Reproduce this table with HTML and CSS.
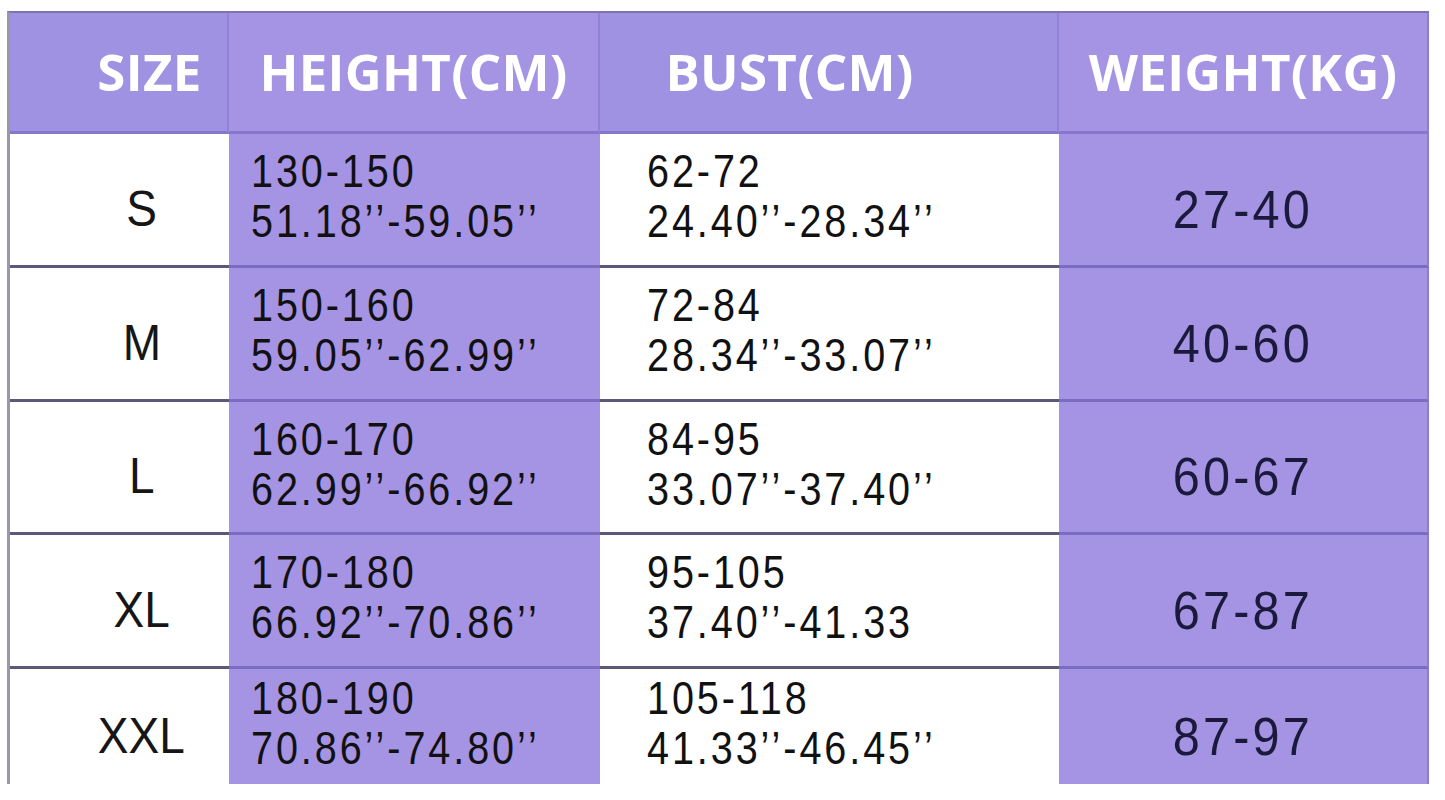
FILE: index.html
```html
<!DOCTYPE html>
<html>
<head>
<meta charset="utf-8">
<link rel="stylesheet" href="styles.css">
</head>
<body>
<div class="chart">
  <div class="cell head c1"><span class="ht size">SIZE</span></div>
  <div class="cell head c2"><span class="ht">HEIGHT(CM)</span></div>
  <div class="cell head c3"><span class="ht bust">BUST(CM)</span></div>
  <div class="cell head c4"><span class="ht">WEIGHT(KG)</span></div>

  <div class="cell c1 row"><span class="sz">S</span></div>
  <div class="cell c2 row"><div class="val"><span>130-150</span><span>51.18’’-59.05’’</span></div></div>
  <div class="cell c3 row"><div class="val"><span>62-72</span><span>24.40’’-28.34’’</span></div></div>
  <div class="cell c4 row"><span class="wt">27-40</span></div>

  <div class="cell c1 row"><span class="sz">M</span></div>
  <div class="cell c2 row"><div class="val"><span>150-160</span><span>59.05’’-62.99’’</span></div></div>
  <div class="cell c3 row"><div class="val"><span>72-84</span><span>28.34’’-33.07’’</span></div></div>
  <div class="cell c4 row"><span class="wt">40-60</span></div>

  <div class="cell c1 row"><span class="sz">L</span></div>
  <div class="cell c2 row"><div class="val"><span>160-170</span><span>62.99’’-66.92’’</span></div></div>
  <div class="cell c3 row"><div class="val"><span>84-95</span><span>33.07’’-37.40’’</span></div></div>
  <div class="cell c4 row"><span class="wt">60-67</span></div>

  <div class="cell c1 row"><span class="sz">XL</span></div>
  <div class="cell c2 row"><div class="val"><span>170-180</span><span>66.92’’-70.86’’</span></div></div>
  <div class="cell c3 row"><div class="val"><span>95-105</span><span>37.40’’-41.33</span></div></div>
  <div class="cell c4 row"><span class="wt">67-87</span></div>

  <div class="cell c1 last"><span class="sz">XXL</span></div>
  <div class="cell c2 last"><div class="val"><span>180-190</span><span>70.86’’-74.80’’</span></div></div>
  <div class="cell c3 last"><div class="val"><span>105-118</span><span>41.33’’-46.45’’</span></div></div>
  <div class="cell c4 last"><span class="wt">87-97</span></div>
</div>
</body>
</html>
```
FILE: styles.css
```css
html, body {
  margin: 0;
  padding: 0;
  background: #ffffff;
}
body {
  padding: 11px 0 0 9px;
  width: 1445px;
  height: 800px;
  box-sizing: border-box;
  overflow: hidden;
}
.chart {
  display: grid;
  grid-template-columns: 219px 371px 459px 370px;
  grid-template-rows: 121px 134px 134px 133px 134px 115px;
  border-top: 2px solid #7e72b4;
  border-left: 3px solid #9a98a8;
  width: 1419px;
  box-sizing: content-box;
  margin-left: -2px;
}
.cell {
  display: flex;
  align-items: center;
  box-sizing: border-box;
  font-family: "Liberation Sans", Arial, sans-serif;
  color: #111111;
}
.head {
  background: #a092e2;
  border-bottom: 3px solid #8677cd;
  border-right: 2px solid #9182d6;
  justify-content: center;
}
.head.c4 { border-right: 2px solid #8c7ed4; }
.ht {
  font-family: "Open Sans", "Liberation Sans", sans-serif;
  font-weight: 700;
  font-size: 51px;
  color: #ffffff;
  letter-spacing: 0.3px;
  padding-bottom: 2px;
}
.size { margin-left: 62px; }
.bust { margin-right: 78px; }
.c1 { background: #ffffff; justify-content: center; }
.c2 { background: #a593e4; }
.c3 { background: #ffffff; }
.c4 { background: #a593e4; justify-content: center; border-right: 2px solid #8c7ed4; }
.head.c1, .head.c3 { background: #a092e2; }
.row { border-bottom: 3px solid #5b5878; }
.row.c2, .row.c4 { border-bottom-color: #7a6cc0; }
.c1 .sz {
  font-size: 50px;
  color: #161616;
  margin-left: 44px;
  padding-top: 18px;
  transform: scaleX(0.92);
}
.val {
  display: flex;
  flex-direction: column;
  font-size: 46px;
  line-height: 50px;
  letter-spacing: 3.4px;
  color: #111111;
  padding-bottom: 7px;
}
.val span {
  display: block;
  white-space: nowrap;
  transform: scaleX(0.86);
  transform-origin: left center;
}
.c2 .val { padding-left: 22px; }
.c3 .val { padding-left: 47px; }
.wt {
  display: block;
  font-size: 54px;
  letter-spacing: 3.5px;
  color: #1b1a3c;
  padding-top: 18px;
  transform: scaleX(0.9);
}
```
